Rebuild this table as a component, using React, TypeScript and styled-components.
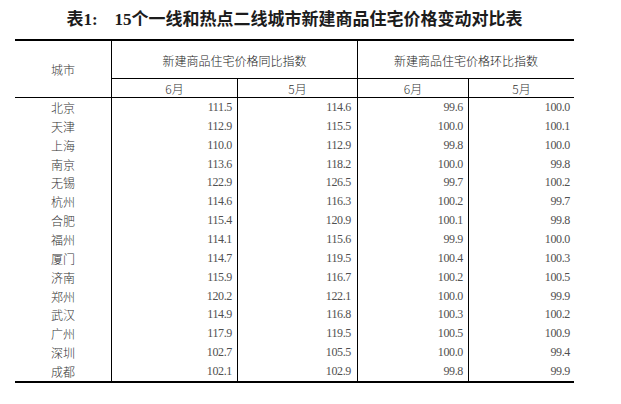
import React from 'react';
import styled, { createGlobalStyle } from 'styled-components';

const GlobalStyle = createGlobalStyle`
  html, body {
    margin: 0;
    padding: 0;
    background: #fff;
  }
`;

const Page = styled.div`
  width: 621px;
  height: 404px;
  padding-left: 15px;
  box-sizing: border-box;
  background: #fff;
`;

const Title = styled.h1`
  width: 559px;
  height: 39px;
  margin: 0;
  line-height: 39px;
  text-align: center;
  font-family: 'Liberation Serif', 'Noto Sans CJK SC', serif;
  font-size: 17px;
  font-weight: 700;
  color: #1c1c1c;
  white-space: nowrap;
`;

const Grid = styled.div`
  display: grid;
  width: 559px;
  grid-template-columns: 96px 126px 120px 111px 106px;
  grid-template-rows: 38px 19px repeat(15, 18.87px);
  border-top: 2px solid #000;
  border-bottom: 2px solid #000;
  font-family: 'Noto Sans CJK SC', sans-serif;
  font-weight: 300;
`;

const Cell = styled.div<{ $divider?: boolean; $align?: 'center' | 'right' }>`
  display: flex;
  align-items: center;
  justify-content: ${(p) => (p.$align === 'right' ? 'flex-end' : 'center')};
  box-sizing: border-box;
  border-left: ${(p) => (p.$divider ? '1px solid #000' : 'none')};
  overflow: hidden;
  white-space: nowrap;
`;

const CityHead = styled(Cell)`
  grid-row: span 2;
  border-bottom: 1px solid #000;
  font-size: 12px;
  color: #333;
`;

const GroupHead = styled(Cell)`
  grid-column: span 2;
  border-bottom: 1px solid #000;
  font-size: 12px;
  color: #222;
  padding-top: 1px;
`;

const SubHead = styled(Cell)`
  border-bottom: 1px solid #000;
  font-size: 12px;
  color: #333;
`;

const City = styled(Cell)`
  font-size: 12px;
  color: #333;
`;

const Num = styled(Cell)<{ $pad: number }>`
  padding-right: ${(p) => p.$pad}px;
  font-family: 'Liberation Serif', serif;
  font-weight: 400;
  font-size: 12px;
  letter-spacing: -0.35px;
  color: #505050;
`;

const rows: [string, string, string, string, string][] = [
  ['北京', '111.5', '114.6', '99.6', '100.0'],
  ['天津', '112.9', '115.5', '100.0', '100.1'],
  ['上海', '110.0', '112.9', '99.8', '100.0'],
  ['南京', '113.6', '118.2', '100.0', '99.8'],
  ['无锡', '122.9', '126.5', '99.7', '100.2'],
  ['杭州', '114.6', '116.3', '100.2', '99.7'],
  ['合肥', '115.4', '120.9', '100.1', '99.8'],
  ['福州', '114.1', '115.6', '99.9', '100.0'],
  ['厦门', '114.7', '119.5', '100.4', '100.3'],
  ['济南', '115.9', '116.7', '100.2', '100.5'],
  ['郑州', '120.2', '122.1', '100.0', '99.9'],
  ['武汉', '114.9', '116.8', '100.3', '100.2'],
  ['广州', '117.9', '119.5', '100.5', '100.9'],
  ['深圳', '102.7', '105.5', '100.0', '99.4'],
  ['成都', '102.1', '102.9', '99.8', '99.9'],
];

const pads = [5, 6, 5, 4];

export default function App(): React.ReactElement {
  return (
    <>
      <GlobalStyle />
      <Page>
        <Title>表1:　15个一线和热点二线城市新建商品住宅价格变动对比表</Title>
        <Grid>
          <CityHead>城市</CityHead>
          <GroupHead $divider>新建商品住宅价格同比指数</GroupHead>
          <GroupHead $divider>新建商品住宅价格环比指数</GroupHead>
          <SubHead $divider>6月</SubHead>
          <SubHead $divider>5月</SubHead>
          <SubHead $divider>6月</SubHead>
          <SubHead $divider>5月</SubHead>
          {rows.map(([city, ...values]) => (
            <React.Fragment key={city}>
              <City>{city}</City>
              {values.map((v, i) => (
                <Num key={i} $divider $align="right" $pad={pads[i]}>
                  {v}
                </Num>
              ))}
            </React.Fragment>
          ))}
        </Grid>
      </Page>
    </>
  );
}
